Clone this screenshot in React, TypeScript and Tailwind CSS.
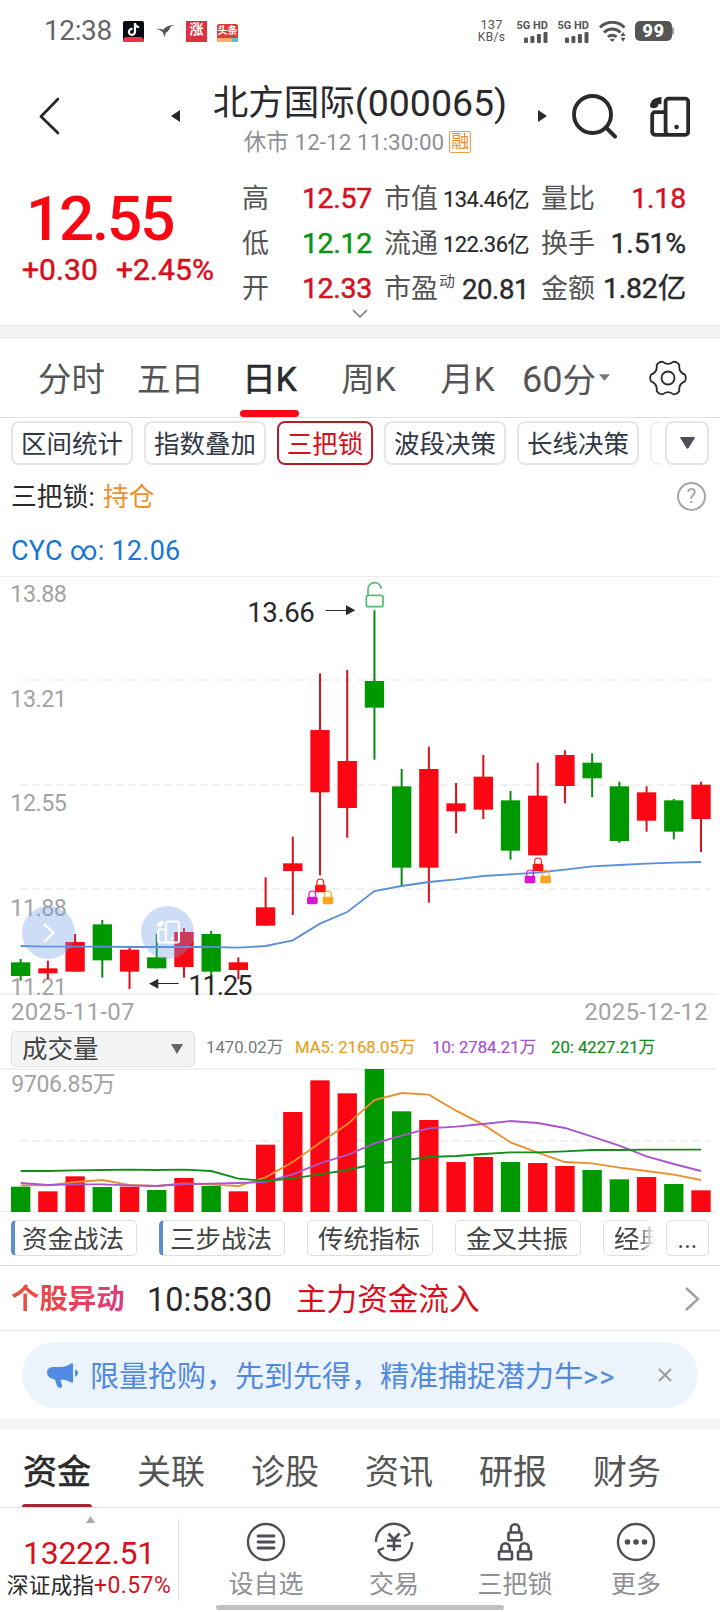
import React from "react";
import { FaTiktok } from "react-icons/fa";

const RED = "#fa0713";
const GREEN = "#009800";
const STEP = 81.64;
const FIRST = 62;

type Candle = { up: boolean; high: number; top: number; bottom: number; low: number; volume: number };

const c = (up: 0 | 1, high: number, top: number, bottom: number, low: number, volume: number): Candle => ({
  up: up === 1,
  high,
  top,
  bottom,
  low,
  volume,
});

const candles: Candle[] = [
  c(0, 1167, 1177, 1218, 1232, 500),
  c(1, 1172, 1195, 1210, 1227, 514),
  c(1, 1092, 1116, 1205, 1205, 469),
  c(0, 1050, 1063, 1171, 1223, 501),
  c(1, 1132, 1139, 1205, 1257, 500),
  c(0, 1092, 1162, 1195, 1195, 510),
  c(1, 1074, 1086, 1191, 1223, 474),
  c(0, 1083, 1092, 1205, 1242, 498),
  c(1, 1162, 1177, 1200, 1228, 514),
  c(1, 922, 1012, 1067, 1067, 374),
  c(1, 800, 880, 903, 1035, 276),
  c(1, 310, 480, 667, 916, 181),
  c(1, 300, 573, 714, 803, 220),
  c(0, 121, 333, 413, 569, 147),
  c(0, 597, 649, 893, 948, 274),
  c(1, 530, 597, 893, 998, 300),
  c(1, 639, 700, 724, 790, 426),
  c(1, 555, 620, 719, 747, 411),
  c(0, 663, 691, 842, 869, 426),
  c(1, 578, 677, 856, 856, 429),
  c(1, 541, 555, 648, 700, 438),
  c(0, 550, 578, 625, 681, 450),
  c(0, 635, 649, 813, 818, 478),
  c(1, 649, 667, 752, 785, 471),
  c(0, 687, 691, 785, 808, 492),
  c(1, 635, 644, 747, 846, 511),
];

const cyc = [1128, 1130, 1130, 1130, 1131, 1131, 1131, 1131, 1133, 1128, 1111, 1061, 1026, 963, 948, 936, 928, 918, 913, 908, 899, 889, 885, 881, 878, 876];
const ma5 = [496, 496, 486, 480, 495, 498, 490, 494, 498, 472, 426, 368, 313, 240, 219, 224, 272, 314, 367, 398, 426, 430, 443, 453, 464, 480];
const ma10 = [489, 495, 493, 493, 496, 498, 492, 491, 489, 486, 463, 430, 405, 370, 347, 325, 320, 312, 303, 309, 324, 350, 377, 409, 432, 453];
const ma20 = [453, 453, 451, 450, 449, 450, 449, 453, 476, 483, 475, 463, 450, 432, 422, 411, 408, 402, 397, 397, 394, 390, 390, 389, 389, 389];

const xAt = (i: number) => FIRST + i * STEP;
const line = (ys: number[]) => ys.map((y, i) => `${xAt(i).toFixed(1)},${y}`).join(" ");

function PhoneIcon({ className, strokeWidth = 3.8 }: { className: string; strokeWidth?: number }) {
  return (
    <svg viewBox="0 0 40 41" className={className} fill="none" stroke="currentColor" strokeWidth={strokeWidth}>
      <rect x="15.6" y="2.6" width="22.6" height="36.2" rx="3" />
      <path d="M15.6 16.2H5.2a3 3 0 0 0-3 3v16.6a3 3 0 0 0 3 3h12" />
      <circle cx="26.6" cy="31" r="2.3" fill="currentColor" stroke="none" />
      <path d="M11.5 1C5 1 0 4.500 0 10.500c1.500 2 6 2 7.600 0 .8-1.100 1-2 .6-3 .6.8 2.300 1.200 3.200.2z" fill="currentColor" stroke="none" />
    </svg>
  );
}

function MiniLock({ x, y, color }: { x: number; y: number; color: string }) {
  return (
    <g transform={`translate(${x} ${y})`}>
      <path d="M6 20V11a10 10 0 0 1 20 0V20" fill="none" stroke={color} strokeWidth="3.500" />
      <rect x="0" y="18" width="32" height="23" rx="5" fill={color} />
    </g>
  );
}

function LockTrio({ x, y }: { x: number; y: number }) {
  return (
    <g transform={`translate(${x} ${y})`}>
      <MiniLock x={-39} y={36} color="#dc14cf" />
      <MiniLock x={8} y={36} color="#f6a61f" />
      <MiniLock x={-15} y={0} color="#fa1414" />
    </g>
  );
}

function PriceChart() {
  const labels: [string, number][] = [
    ["13.88", 96],
    ["13.21", 411],
    ["12.55", 723],
    ["11.88", 1038],
    ["11.21", 1275],
  ];
  return (
    <svg viewBox="0 0 2160 1290" className="block h-[430px] w-[720px]">
      <path d="M0 19H2154M0 1272H2154" stroke="#ededed" strokeWidth="4" />
      <path d="M62 330H2130M62 645H2130M62 957H2130" stroke="#ebebeb" strokeWidth="4" strokeDasharray="22 14" />
      {labels.map(([t, y]) => (
        <text key={t} x="31" y={y} fontSize="70" letterSpacing="-1.500" fill="#a3a3a3">
          {t}
        </text>
      ))}
      {candles.map((k, i) => (
        <g key={i} fill={k.up ? RED : GREEN}>
          <rect x={xAt(i) - 3} y={k.high} width="6" height={k.low - k.high} fill={k.up ? "#d90f1c" : "#0b8a12"} />
          <rect x={xAt(i) - 29} y={k.top} width="58" height={k.bottom - k.top} />
        </g>
      ))}
      <polyline points={line(cyc)} fill="none" stroke="#5a8fd6" strokeWidth="5.500" />
      <LockTrio x={960} y={926} />
      <LockTrio x={1613} y={863} />
      <g fill="none" stroke="#4fbd72" strokeWidth="5">
        <rect x="1099" y="76" width="50" height="34" rx="6" />
        <path d="M1104 76V60a20 20 0 0 1 40-4" />
      </g>
      <g fill="#2a2a2c">
        <text x="742" y="155" fontSize="83" letterSpacing="-1.500">13.66</text>
        <path d="M977 120h62v3h-62zM1038 106l28 15-28 15z" />
        <text x="565" y="1275" fontSize="83" letterSpacing="-4">11.25</text>
        <path d="M536 1239h-62v3h62zM475 1226l-28 15 28 15z" />
      </g>
    </svg>
  );
}

function VolumeChart() {
  return (
    <svg viewBox="0 144 2160 435" className="block h-[145px] w-[720px]">
      <path d="M0 147H2148" stroke="#ededed" strokeWidth="5" />
      <path d="M0 575H2148" stroke="#ededed" strokeWidth="4" />
      <path d="M62 363H2130" stroke="#ebebeb" strokeWidth="4" strokeDasharray="22 14" />
      <text x="34" y="215" fontSize="69" letterSpacing="-1" fill="#a3a3a3">9706.85万</text>
      {candles.map((k, i) => (
        <rect key={i} x={xAt(i) - 29} y={k.volume} width="58" height={576 - k.volume} fill={k.up ? RED : GREEN} />
      ))}
      <g fill="none" strokeWidth="5.500">
        <polyline points={line(ma5)} stroke="#ea8f2f" />
        <polyline points={line(ma10)} stroke="#aa55cc" />
        <polyline points={line(ma20)} stroke="#138c18" />
      </g>
    </svg>
  );
}

function polar(deg: number, r: number) {
  const a = (deg * Math.PI) / 180;
  return `${(19 + r * Math.cos(a)).toFixed(2)} ${(19 + r * Math.sin(a)).toFixed(2)}`;
}

function GearIcon() {
  let d = `M${polar(-11, 17.3)}`;
  for (let i = 0; i < 6; i++) {
    const a = i * 60;
    d += `Q${polar(a, 18.6)} ${polar(a + 11, 17.3)}Q${polar(a + 30, 11.800)} ${polar(a + 49, 17.3)}`;
  }
  return (
    <svg viewBox="0 0 38 38" className="h-[38px] w-[38px]" fill="none" stroke="#2a2a2c" strokeWidth="1.800" strokeLinejoin="round">
      <path d={d + "Z"} />
      <circle cx="19" cy="19" r="6.500" />
    </svg>
  );
}

function Signal() {
  return (
    <div className="flex w-[33px] flex-col items-end">
      <span className="h-[11px] text-[11px] leading-[11px] font-bold whitespace-nowrap">5G HD</span>
      <svg viewBox="0 0 24 11" className="mt-px h-[11px] w-[24px]" fill="#555">
        <rect x="0" y="5.500" width="4" height="5.500" rx="1" />
        <rect x="6.400" y="4" width="4" height="7" rx="1" />
        <rect x="12.900" y="2" width="4" height="9" rx="1" />
        <rect x="19.500" y="0" width="4" height="11" rx="1" />
      </svg>
    </div>
  );
}

function StatusBar() {
  return (
    <div className="flex h-[62px] items-center pl-[44px] text-[#555]">
      <span className="w-[79px] text-[28px] leading-none tracking-[-0.4px] text-[#666]">12:38</span>
      <div className="flex h-[21px] w-[21px] flex-col items-center overflow-hidden rounded-[2px] bg-[#0b0b14]">
        <FaTiktok className="mt-[2px] h-[13px] w-[13px] text-white" />
        <div className="mt-[1px] h-[5px] w-full rounded-t-sm bg-[#e8344e]" />
      </div>
      <svg viewBox="0 0 18 12" className="ml-[12px] h-[12px] w-[18px]" fill="#555">
        <path d="M0 4c3-.6 5.500-.2 7.500.8C9 2 12 .4 17.700 0c-.5 1-2 1.300-3 1.400-1 3-2.500 5-5 6.400L8.800 12C8 10.500 7.300 9 7 7.600 5.500 5.700 3.500 4.500 0 4z" />
      </svg>
      <div className="ml-[12px] flex h-[21px] w-[21px] items-start justify-center overflow-hidden bg-[#e0303f] text-[14px] leading-[17px] font-bold text-white">涨</div>
      <div className="mt-[3px] ml-[10px] flex h-[18px] w-[21px] flex-col overflow-hidden rounded-[2px] bg-[#e23a36]">
        <span className="h-[14px] text-center text-[10px] leading-[13px] font-bold whitespace-nowrap text-white">头条</span>
        <div className="flex h-[4px]">
          <div className="w-[15px] bg-[#f5b06a]" />
          <div className="flex-1 bg-[#46c3d6]" />
        </div>
      </div>
      <div className="ml-[239px] flex w-[29px] flex-col items-center text-[13px] leading-[12px]">
        <span>137</span>
        <span className="text-[12px] tracking-[0.3px]">KB/s</span>
      </div>
      <div className="ml-[9px] flex gap-[8px]">
        <Signal />
        <Signal />
      </div>
      <svg viewBox="0 0 27 21" className="ml-[10px] h-[21px] w-[27px]" fill="none" stroke="#555" strokeWidth="3">
        <path d="M1 6.500a17 17 0 0 1 24.500 0" />
        <path d="M5 11.500a11.500 11.500 0 0 1 16.500 0" />
        <path d="M9 16a6 6 0 0 1 8.500 0" />
        <path d="M10.800 18.500a3.800 3.800 0 0 1 4.900 0L13.200 21zM21.500 15l2.500-4 2.500 4zM21.500 16.800l2.500 4 2.500-4z" fill="#555" stroke="none" />
      </svg>
      <div className="ml-[9px] flex h-[20px] w-[37px] items-center justify-center rounded-[5px] bg-[#555] pt-[1px] text-[18.500px] leading-none font-extrabold tracking-[0.5px] text-white">99</div>
      <div className="h-[8px] w-[2px] rounded-r bg-[#999]" />
    </div>
  );
}

function Header() {
  return (
    <div className="flex h-[103px]">
      <svg viewBox="0 0 20 38" className="mt-[35px] ml-[39px] h-[38px] w-[20px]" fill="none" stroke="#2a2a2c" strokeWidth="2.800" strokeLinecap="round" strokeLinejoin="round">
        <path d="M19 2 2 19.500 19 36" />
      </svg>
      <svg viewBox="0 0 9 12" className="mt-[48px] ml-[112px] h-[12px] w-[9px]" fill="#2a2a2c">
        <path d="M9 0v12L0 6z" />
      </svg>
      <div className="ml-[10px] flex w-[340px] flex-col items-center">
        <div className="mt-[20px] flex h-[42px] items-center text-[#2a2a2c]">
          <span className="text-[35.500px] leading-[42px]">北方国际</span>
          <span className="text-[37.500px] leading-[42px]">(000065)</span>
        </div>
        <div className="mt-[5px] mr-[5px] flex h-[26px] items-center text-[22.500px] text-[#8f9095]">
          <span className="leading-[26px] tracking-[0.05px] whitespace-nowrap">休市 12-12 11:30:00</span>
          <span className="ml-[5px] flex h-[22px] w-[22px] items-center justify-center rounded-[2px] border-[1.5px] border-[#ef9a3d] text-[18px] leading-none text-[#ef8f2a]">融</span>
        </div>
      </div>
      <svg viewBox="0 0 9 12" className="mt-[48px] ml-[8px] h-[12px] w-[9px]" fill="#2a2a2c">
        <path d="M0 0v12l9-6z" />
      </svg>
      <svg viewBox="0 0 46 46" className="mt-[31px] ml-[25px] h-[46px] w-[46px]" fill="none" stroke="#2a2a2c" strokeWidth="3.900" strokeLinecap="round">
        <circle cx="20.500" cy="21.500" r="18.500" />
        <path d="M34 34.500 43 43.500" />
      </svg>
      <PhoneIcon className="mt-[34px] ml-[32px] h-[41px] w-[40px] text-[#2a2a2c]" />
    </div>
  );
}

type QuoteRow = { a: string; av: string; ac: string; b: string; bv: string; small?: boolean; sup?: string; d: string; dv: string; dc: string };

const quoteRows: QuoteRow[] = [
  { a: "高", av: "12.57", ac: "text-[#d7101c]", b: "市值", bv: "134.46亿", small: true, d: "量比", dv: "1.18", dc: "text-[#d7101c]" },
  { a: "低", av: "12.12", ac: "text-[#0b9314]", b: "流通", bv: "122.36亿", small: true, d: "换手", dv: "1.51%", dc: "text-[#2a2a2c]" },
  { a: "开", av: "12.33", ac: "text-[#d7101c]", b: "市盈", bv: "20.81", sup: "动", d: "金额", dv: "1.82亿", dc: "text-[#2a2a2c]" },
];

function Quote() {
  return (
    <div className="flex h-[160px]">
      <div className="w-[242px]">
        <div className="mt-[24px] flex h-[60px] items-center pl-[26px] text-[62px] leading-none font-medium tracking-[-2.2px] text-[#fa0713]">12.55</div>
        <div className="mt-[6px] flex h-[30px] items-center pl-[22px] text-[30px] leading-none tracking-[0.1px] text-[#d7101c] [-webkit-text-stroke:0.5px]">
          <span className="w-[94px]">+0.30</span>
          <span>+2.45%</span>
        </div>
      </div>
      <div className="flex flex-col">
        <div className="mt-[12px] flex flex-col">
          {quoteRows.map((r) => (
            <div key={r.a} className="flex h-[45px] items-center text-[27px] leading-none whitespace-nowrap text-[#555]">
              <span className="w-[50px]">{r.a}</span>
              <span className={`w-[80px] text-right text-[28.500px] tracking-[-0.3px] [-webkit-text-stroke:0.5px] ${r.ac}`}>{r.av}</span>
              <span className="ml-[12px]">{r.b}</span>
              <div className="flex w-[91px] items-center">
                {r.sup && <span className="mb-[16px] ml-px text-[16px]">{r.sup}</span>}
                <span className={`flex-1 text-right text-[#2a2a2c] ${r.small ? "text-[22px] tracking-[-0.5px] [-webkit-text-stroke:0.2px]" : "text-[27.500px] tracking-[-0.4px] [-webkit-text-stroke:0.4px]"}`}>{r.bv}</span>
              </div>
              <span className="ml-[12px]">{r.d}</span>
              <span className={`w-[91px] text-right text-[28.500px] tracking-[-0.2px] [-webkit-text-stroke:0.4px] ${r.dc}`}>{r.dv}</span>
            </div>
          ))}
        </div>
        <svg viewBox="0 0 16 9" className="mt-[-3px] ml-[110px] h-[9px] w-[16px]" fill="none" stroke="#777" strokeWidth="1.500">
          <path d="M1 1l7 7 7-7" />
        </svg>
      </div>
    </div>
  );
}

function PeriodTabs() {
  return (
    <div className="flex h-[80px] items-center border-b border-[#e0e0e0] pl-[22px] text-[33.500px] leading-none whitespace-nowrap text-[#555]">
      {["分时", "五日", "日K", "周K", "月K"].map((t) =>
        t === "日K" ? (
          <div key={t} className="flex h-[79px] w-[99px] flex-col items-center justify-between text-[#2a2a2c] [-webkit-text-stroke:0.6px]">
            <span className="mt-[25px]">{t}</span>
            <span className="h-[7px] w-[59px] rounded-full bg-[#fa0713]" />
          </div>
        ) : (
          <div key={t} className="w-[99px] pt-[4px] text-center">{t}</div>
        )
      )}
      <span className="ml-[5px] pt-[4px]"><span className="text-[36px]">60</span>分</span>
      <svg viewBox="0 0 12 7" className="ml-[3px] h-[7px] w-[11px]" fill="#777">
        <path d="M0 0h12L6 7z" />
      </svg>
      <div className="ml-[39px]">
        <GearIcon />
      </div>
    </div>
  );
}

function Chips() {
  const chip = "flex h-[44px] w-[122px] shrink-0 items-center justify-center rounded-[8px] border-2 border-[#e6e6e6] pt-[4px] text-[25.500px] leading-none whitespace-nowrap text-[#333845]";
  return (
    <div className="flex h-[48px] pt-[3px] pl-[11px]">
      <div className="flex w-[650px] gap-[11px] overflow-hidden">
        <div className={chip}>区间统计</div>
        <div className={chip}>指数叠加</div>
        <div className="flex h-[44px] w-[96px] shrink-0 items-center justify-center rounded-[8px] border-2 border-[#b3202b] pt-[4px] text-[25.500px] leading-none text-[#d7101c]">三把锁</div>
        <div className={chip}>波段决策</div>
        <div className={chip}>长线决策</div>
        <div className="h-[44px] w-[40px] shrink-0 rounded-[8px] border-2 border-[#efefef]" />
      </div>
      <div className="ml-[4px] flex h-[44px] w-[44px] items-center justify-center rounded-[8px] border-2 border-[#e6e6e6]">
        <svg viewBox="0 0 15 12" className="h-[12px] w-[15px]" fill="#4d4e57">
          <path d="M1 0h13q1.500 0 .6 1.300L8.600 11q-1.100 1.300-2.200 0L.4 1.300Q-.5 0 1 0z" />
        </svg>
      </div>
    </div>
  );
}

function VolumeHeader() {
  return (
    <div className="flex h-[42px] items-center pt-[3px] pl-[11px] text-[16.700px] leading-none whitespace-nowrap">
      <div className="flex h-[36px] w-[184px] items-center justify-between rounded-[5px] border border-[#dedede] bg-[#f4f4f4] pr-[11px] pl-[10px] text-[25.500px] text-[#444]">
        <span className="pt-[3px]">成交量</span>
        <svg viewBox="0 0 12 10" className="h-[10px] w-[12px]" fill="#666">
          <path d="M0 0h12L6 10z" />
        </svg>
      </div>
      <span className="ml-[11px] w-[89px] text-[#777]">1470.02万</span>
      <span className="w-[137px] text-[#eaa01c] [-webkit-text-stroke:0.2px]">MA5: 2168.05万</span>
      <span className="w-[119px] text-[#a84fd0] [-webkit-text-stroke:0.2px]">10: 2784.21万</span>
      <span className="text-[#138c18] [-webkit-text-stroke:0.2px]">20: 4227.21万</span>
    </div>
  );
}

function StrategyChips() {
  const base = "flex h-[36px] w-[126px] shrink-0 items-center rounded-[5px] border border-[#dedede] pt-[3px] pl-[10px] text-[25.500px] leading-none whitespace-nowrap text-[#444]";
  return (
    <div className="flex h-[53px] border-b border-[#e0e0e0] pt-[7px] pl-[11px]">
      <div className="flex w-[644px] gap-[22px] overflow-hidden">
        {["资金战法", "三步战法"].map((t) => (
          <div key={t} className="flex h-[36px] w-[126px] shrink-0 items-center rounded-[5px] border border-l-4 border-[#dedede] border-l-[#5b8ed0] pt-[3px] pl-[7px] text-[25.500px] leading-none whitespace-nowrap text-[#444]">
            {t}
          </div>
        ))}
        <div className={base}>传统指标</div>
        <div className={base}>金叉共振</div>
        <div className={`${base} [mask-image:linear-gradient(to_right,#000_34px,transparent_52px)]`}>经典</div>
      </div>
      <div className="ml-[11px] flex h-[36px] w-[43px] items-center justify-center rounded-[5px] border border-[#dedede] pt-[2px] text-[25px] leading-none text-[#444]">...</div>
    </div>
  );
}

function Banner() {
  return (
    <div className="mx-[22px] mt-[11px] flex h-[66px] items-center rounded-full bg-[#ebf3fc] pl-[25px] text-[29px] leading-none whitespace-nowrap text-[#5189dc]">
      <svg viewBox="0 0 32 26" className="mt-[2px] h-[26px] w-[32px] shrink-0" fill="#4f8be4">
        <path d="M7 4h6c5 0 8-1.500 11-3.500q2-1 2 1v17q0 2-2 1-3-2-7-2.700h-3.500l1.500 6q.3 2.200-2 2.200-2 0-3-2.500l-2.200-6Q0 15 0 9.500 0 4 7 4zM28 6.500q3 1 3 3.500t-3 3.500z" />
      </svg>
      <span className="ml-[11px] w-[568px] shrink-0 pt-[4px]">限量抢购，先到先得，精准捕捉潜力牛<span className="tracking-[1px]">&gt;&gt;</span></span>
      <svg viewBox="0 0 14 14" className="h-[14px] w-[14px] shrink-0" fill="none" stroke="#999" strokeWidth="1.800">
        <path d="M1 1l12 12M13 1 1 13" />
      </svg>
    </div>
  );
}

function NavIcon({ kind }: { kind: string }) {
  return (
    <svg viewBox="0 0 40 40" className="h-[40px] w-[40px]" fill="none" stroke="#4d4e57" strokeWidth="2.400">
      {kind === "list" && (
        <>
          <circle cx="20" cy="20" r="18" />
          <path d="M12 14h16M12 20h16M12 26h16" strokeLinecap="round" strokeWidth="2.800" />
        </>
      )}
      {kind === "trade" && (
        <>
          <path d="M2 20A18 18 0 0 1 36 11.500M36 11.500l-6 2.500M38 20A18 18 0 0 1 4 28.500M4 28.500l6-2.500" />
          <path d="M14.500 11.500 20 17.500l5.500-6M20 17.500V29M13 18.500h14M13 24h14" strokeWidth="2.600" />
        </>
      )}
      {kind === "locks" && (
        <g strokeWidth="2.600">
          <rect x="13.500" y="10.500" width="13" height="7.800" rx="1" />
          <path d="M15.800 10.500V6.500a4.200 4.200 0 0 1 8.400 0v4" />
          <rect x="4" y="29.500" width="13" height="7.800" rx="1" />
          <path d="M6.300 29.500v-4a4.200 4.200 0 0 1 8.400 0v4" />
          <rect x="23" y="29.500" width="13" height="7.800" rx="1" />
          <path d="M25.300 29.500v-4a4.200 4.200 0 0 1 8.400 0v4" />
        </g>
      )}
      {kind === "more" && (
        <>
          <circle cx="20" cy="20" r="18" />
          <g fill="#4d4e57" stroke="none">
            <circle cx="11.500" cy="20" r="2.800" />
            <circle cx="20" cy="20" r="2.800" />
            <circle cx="28.500" cy="20" r="2.800" />
          </g>
        </>
      )}
    </svg>
  );
}

function NavItem({ kind, label, className }: { kind: string; label: string; className: string }) {
  return (
    <div className={`flex flex-col items-center pt-[14px] ${className}`}>
      <NavIcon kind={kind} />
      <span className="mt-[9px] text-[25px] leading-[28px] whitespace-nowrap text-[#8f9095]">{label}</span>
    </div>
  );
}

function BottomBar() {
  return (
    <div className="relative flex h-[104px] bg-white">
      <div className="flex w-[178px] flex-col items-center whitespace-nowrap">
        <svg viewBox="0 0 9 7" className="mt-[8px] ml-[2px] h-[7px] w-[9px]" fill="#aaa">
          <path d="M4.500 0 9 7H0z" />
        </svg>
        <span className="mt-[13px] text-[32px] leading-[34px] tracking-[-0.3px] text-[#d7101c]">13222.51</span>
        <span className="mt-[3px] flex items-center text-[21.800px] leading-[26px] text-[#2a2a2c]">
          深证成指<span className="text-[23px] tracking-[0.4px] text-[#d7101c]">+0.57%</span>
        </span>
      </div>
      <div className="mt-[11px] h-[82px] w-px bg-[#dedede]" />
      <NavItem kind="list" label="设自选" className="ml-[23px] w-[128px]" />
      <NavItem kind="trade" label="交易" className="w-[128px]" />
      <NavItem kind="locks" label="三把锁" className="w-[114px]" />
      <NavItem kind="more" label="更多" className="w-[128px]" />
      <div className="absolute bottom-[2px] left-[216px] h-[5px] w-[288px] rounded-full bg-[#c1c1c1]" />
    </div>
  );
}

export default function App() {
  return (
    <div className="flex h-[1612px] w-[720px] flex-col overflow-hidden bg-white font-['Roboto','Noto_Sans_CJK_SC',sans-serif]">
      <StatusBar />
      <Header />
      <Quote />
      <div className="h-[13px] shrink-0 border-y border-[#e4e4e4] bg-[#f4f4f4]" />
      <PeriodTabs />
      <Chips />
      <div className="flex h-[62px] items-center justify-between pr-[14px] pl-[11px] text-[25.800px] leading-none text-[#2a2a2c]">
        <span className="pt-[2px]">
          三把锁: <span className="ml-[2px] text-[#ee8f2b]">持仓</span>
        </span>
        <div className="mb-[2px] flex h-[29px] w-[29px] items-center justify-center rounded-full border-[2.5px] border-[#a6a6a6] text-[21px] leading-none text-[#a6a6a6]">?</div>
      </div>
      <div className="flex h-[42px] items-start pt-[9px] pl-[11px] text-[27px] leading-[28px] tracking-[0.25px] text-[#1677d2]">CYC ∞: 12.06</div>
      <div className="relative h-[430px] shrink-0">
        <PriceChart />
        <div className="absolute top-[336px] left-[22px] flex h-[53px] w-[53px] items-center justify-center rounded-full bg-[#6f9fe6]/35">
          <svg viewBox="0 0 12 20" className="h-[20px] w-[12px]" fill="none" stroke="#fff" strokeWidth="2.400">
            <path d="M1 1l9.500 9L1 19" />
          </svg>
        </div>
        <div className="absolute top-[336px] left-[141px] flex h-[53px] w-[53px] items-center justify-center rounded-full bg-[#6f9fe6]/35">
          <PhoneIcon className="mt-[-1px] ml-[2px] h-[24px] w-[23px] text-white" />
        </div>
      </div>
      <div className="flex h-[26px] items-center justify-between pr-[12px] pb-[2px] pl-[11px] text-[24px] leading-none tracking-[0.25px] text-[#a3a3a3]">
        <span>2025-11-07</span>
        <span>2025-12-12</span>
      </div>
      <VolumeHeader />
      <VolumeChart />
      <StrategyChips />
      <div className="flex h-[65px] items-center border-b border-[#e0e0e0] pt-[4px] pl-[11px] leading-none whitespace-nowrap">
        <span className="w-[136px]">
          <span className="bg-gradient-to-r from-[#e8503a] via-[#ee4050] to-[#dc3c84] bg-clip-text text-[28.400px] leading-[36px] font-bold text-transparent">个股异动</span>
        </span>
        <span className="w-[149px] text-[32.400px] text-[#2a2a2c]">10:58:30</span>
        <span className="w-[388px] text-[30.600px] text-[#d7101c]">主力资金流入</span>
        <svg viewBox="0 0 16 24" className="mb-[3px] h-[24px] w-[16px]" fill="none" stroke="#a0a0a0" strokeWidth="2.400">
          <path d="M2 1l12 11L2 23" />
        </svg>
      </div>
      <Banner />
      <div className="mt-[11px] h-[11px] shrink-0 bg-[#f4f4f4]" />
      <div className="flex h-[78px] border-b border-[#dedede] text-[34px] leading-none whitespace-nowrap text-[#555]">
        {["资金", "关联", "诊股", "资讯", "研报", "财务"].map((t, i) => (
          <div key={t} className={`flex w-[114px] flex-col items-center justify-between ${i === 0 ? "text-[#2a2a2c] [-webkit-text-stroke:0.6px]" : ""}`}>
            <span className="mt-[25px]">{t}</span>
            {i === 0 && <span className="h-[3px] w-[70px] rounded-t-full bg-[#a3262f]" />}
          </div>
        ))}
      </div>
      <BottomBar />
    </div>
  );
}
